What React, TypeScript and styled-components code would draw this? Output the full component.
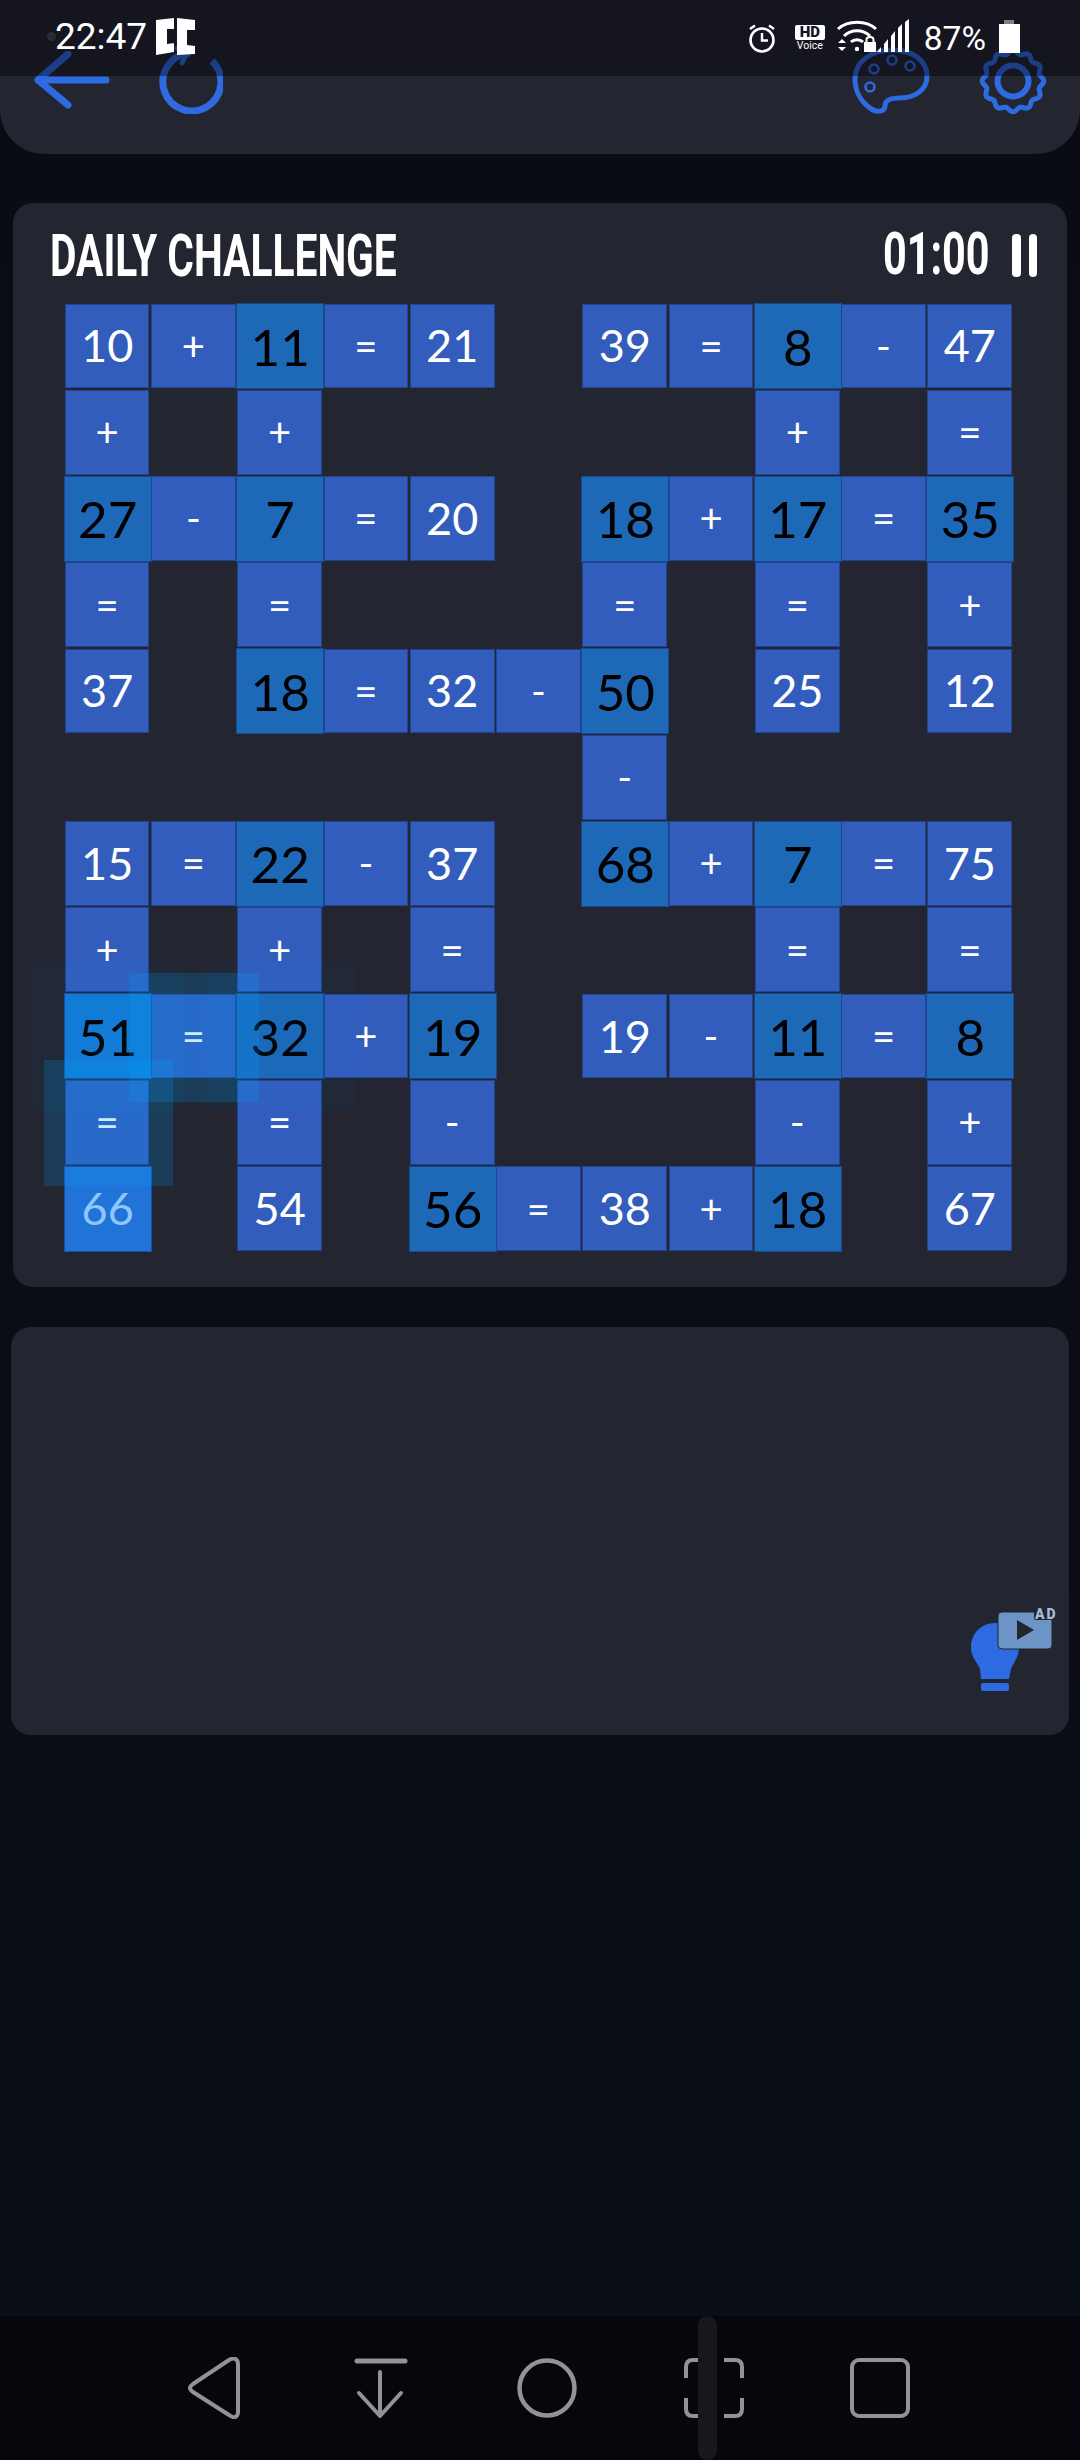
import React from 'react';
import styled, { createGlobalStyle } from 'styled-components';

const ROWS = [
    ['10', '+', '11*', '=', '21', '', '39', '=', '8*', '-', '47'],
    ['+', '', '+', '', '', '', '', '', '+', '', '='],
    ['27*', '-', '7*', '=', '20', '', '18*', '+', '17*', '=', '35*'],
    ['=', '', '=', '', '', '', '=', '', '=', '', '+'],
    ['37', '', '18*', '=', '32', '-', '50*', '', '25', '', '12'],
    ['', '', '', '', '', '', '-', '', '', '', ''],
    ['15', '=', '22*', '-', '37', '', '68*', '+', '7*', '=', '75'],
    ['+', '', '+', '', '=', '', '', '', '=', '', '='],
    ['51#', '=', '32*', '+', '19*', '', '19', '-', '11*', '=', '8*'],
    ['=', '', '=', '', '-', '', '', '', '-', '', '+'],
    ['66!', '', '54', '', '56*', '=', '38', '+', '18*', '', '67'],
];

const GLOWS = [
    { x: 32, y: 962, size: 151, h: 148, alpha: 0.04 },
    { x: 206, y: 962, size: 151, h: 148, alpha: 0.04 },
    { x: 129, y: 973, size: 130, h: 129, alpha: 0.2 },
    { x: 44, y: 1060, size: 129, h: 126, alpha: 0.2 },
];

function gearPath(cx: number, cy: number, r: number, bumps: number) {
    let d = '';
    for (let i = 0; i <= 180; i++) {
        const a = (i / 180) * Math.PI * 2;
        const rr = r + 1.8 * Math.cos(a * bumps);
        d += (i ? 'L' : 'M') + (cx + rr * Math.cos(a)).toFixed(2) + ' ' + (cy + rr * Math.sin(a)).toFixed(2);
    }
    return d + 'Z';
}

function tileVariant(raw: string): TileVariant {
    if (raw.endsWith('*')) return 'solved';
    if (raw.endsWith('#')) return 'selected';
    if (raw.endsWith('!')) return 'active';
    return 'plain';
}

function App() {
    return (
        <>
            <GlobalStyle />
            <Screen>
                <StatusBar>
                    <StatusLeft>
                        <CameraDot />
                        <Clock>22:47</Clock>
                        <svg width="40" height="38" viewBox="0 0 40 38">
                            <path fill="#fff" fillRule="evenodd" d="M0 2 L18 0 V34 L0 37Z M11 11 V26 L18 25 V11Z" />
                            <path fill="#fff" fillRule="evenodd" d="M21 0 L39 2 V36 L21 37Z M31 12 V27 L39 28 V12Z" />
                        </svg>
                    </StatusLeft>
                    <StatusRight>
                        <AlarmSlot>
                            <svg width="28" height="32" viewBox="0 0 28 32" fill="none" stroke="#fff">
                                <circle cx="14" cy="18" r="11.5" strokeWidth="2.6" />
                                <path d="M14 11 V18.5 H20" strokeWidth="2.4" />
                                <path d="M2 7 L7 3.5 M26 7 L21 3.5" strokeWidth="2.4" />
                            </svg>
                        </AlarmSlot>
                        <HdSlot>
                            <HdBox>HD</HdBox>
                            <VoiceLabel>Voice</VoiceLabel>
                        </HdSlot>
                        <svg width="40" height="34" viewBox="0 0 40 34" fill="none" stroke="#fff" strokeWidth="3">
                            <path d="M1 10 C11 1 29 1 39 10" />
                            <path d="M7 17 C14 10 26 10 33 17" />
                            <path d="M14 23 C17 20 23 20 26 23" />
                            <circle cx="20" cy="30" r="2.2" fill="#fff" stroke="none" />
                            <path d="M1 24 L5 20 L9 24Z M1 28 L5 32 L9 28Z" fill="#fff" stroke="none" />
                            <rect x="27" y="23" width="12" height="10" fill="#fff" stroke="none" />
                            <path d="M29.5 23 V20.5 C29.5 17 36.5 17 36.5 20.5 V23" strokeWidth="2" />
                        </svg>
                        <svg width="33" height="34" viewBox="0 0 33 34" fill="#fff">
                            <path d="M0 33 L4 28 V33Z M7 33 V25 L11 20 V33Z M14 33 V17 L18 12 V33Z M21 33 V9 L25 5 V33Z M28 33 V3 L32 0 V33Z" />
                        </svg>
                        <Percent>87%</Percent>
                        <Battery />
                    </StatusRight>
                </StatusBar>

                <TopPanel>
                    <IconGroup $gap={47}>
                        <svg width="76" height="58" viewBox="0 0 76 58" fill="none" stroke="#2f6be0" strokeWidth="7" strokeLinecap="round" strokeLinejoin="round">
                            <path d="M72 29 H4 M34 3 L4 29 L34 54" />
                        </svg>
                        <svg width="66" height="68" viewBox="0 0 66 68" fill="none" stroke="#2f6be0" strokeWidth="7" strokeLinecap="round">
                            <path d="M55 15 A29 29 0 1 1 33 7" strokeLinecap="butt" />
                            <path d="M20 2 L30 7 L25 17" strokeWidth="5" />
                        </svg>
                    </IconGroup>
                    <IconGroup $gap={49}>
                        <svg width="78" height="70" viewBox="0 0 78 70" fill="none" stroke="#2f6be0">
                            <path strokeWidth="5" d="M40 4 C60 4 75 14 75 30 C75 46 60 52 48 52 C38 52 33 54 33 60 C33 66 24 67 18 62 C8 55 3 44 3 33 C3 15 20 4 40 4Z" />
                            <circle cx="22" cy="23" r="4.5" strokeWidth="2.6" />
                            <circle cx="40" cy="14" r="4.5" strokeWidth="2.6" />
                            <circle cx="58" cy="20" r="4.5" strokeWidth="2.6" />
                            <circle cx="18" cy="41" r="4.5" strokeWidth="2.6" />
                        </svg>
                        <svg width="68" height="68" viewBox="0 0 68 68" fill="none" stroke="#2f6be0">
                            <path strokeWidth="5" d={gearPath(34, 34, 29, 12)} />
                            <circle cx="34" cy="34" r="15.5" strokeWidth="6" />
                        </svg>
                    </IconGroup>
                </TopPanel>

                <GameCard>
                    <CardHeader>
                        <Title>DAILY CHALLENGE</Title>
                        <TimerWrap>
                            <Timer>01:00</Timer>
                            <PauseBar />
                            <PauseBar />
                        </TimerWrap>
                    </CardHeader>
                    <Board>
                        {ROWS.flatMap((row, r) =>
                            row.map((raw, c) => {
                                if (!raw) return <span key={`${r}-${c}`} />;
                                const text = raw.replace(/[*!#]/, '');
                                return (
                                    <Tile key={`${r}-${c}`} $variant={tileVariant(raw)} $op={/[+=-]/.test(text)}>
                                        {text}
                                    </Tile>
                                );
                            })
                        )}
                    </Board>
                </GameCard>

                <HintCard>
                    <svg width="90" height="86" viewBox="0 0 90 86">
                        <path fill="#2f6be0" d="M25 16 C11 16 1 27 1 40 C1 50 7 55 10 62 L11 72 H39 L41 62 C44 55 49 50 49 40 C49 27 39 16 25 16Z" />
                        <rect x="11" y="76" width="28" height="8" rx="2" fill="#2f6be0" />
                        <rect x="28" y="5" width="54" height="37" rx="4" fill="#6c94c4" stroke="#232530" strokeWidth="1" />
                        <path d="M47 13 L64 23 L47 33Z" fill="#232530" />
                        <rect x="64" y="0" width="24" height="13" rx="2" fill="#232530" />
                        <AdText x="65" y="12">AD</AdText>
                    </svg>
                </HintCard>

                <Filler />

                <NavBar>
                    <NavSlot>
                        <svg width="54" height="62" viewBox="0 0 54 62" fill="none" stroke="#939397" strokeWidth="4" strokeLinejoin="round">
                            <path d="M5 27 L41 3 C46 0 50 2 50 7 V55 C50 60 46 62 41 58 L5 35 C1 32 1 30 5 27Z" />
                        </svg>
                    </NavSlot>
                    <NavSlot>
                        <svg width="54" height="62" viewBox="0 0 54 62" fill="none" stroke="#939397" strokeLinecap="round" strokeLinejoin="round">
                            <path d="M3 4 H51" strokeWidth="5" />
                            <path d="M26 15 V59 M5 36 L26 59 L47 36" strokeWidth="4" />
                        </svg>
                    </NavSlot>
                    <NavSlot>
                        <svg width="60" height="62" viewBox="0 0 60 62" fill="none" stroke="#939397" strokeWidth="4.5">
                            <circle cx="30" cy="31" r="27.5" />
                        </svg>
                    </NavSlot>
                    <NavSlot>
                        <svg width="60" height="62" viewBox="0 0 60 62" fill="none" stroke="#939397" strokeWidth="4">
                            <path d="M20 3 H9 Q2 3 2 10 V21 M40 3 H51 Q58 3 58 10 V21 M2 41 V52 Q2 59 9 59 H20 M58 41 V52 Q58 59 51 59 H40" />
                        </svg>
                    </NavSlot>
                    <NavSlot>
                        <svg width="60" height="62" viewBox="0 0 60 62" fill="none" stroke="#939397" strokeWidth="4">
                            <rect x="2" y="3" width="56" height="56" rx="7" />
                        </svg>
                    </NavSlot>
                    <ScrollPill />
                </NavBar>

                {GLOWS.map((g) => (
                    <Glow
                        key={`${g.x}-${g.y}`}
                        style={{ left: g.x, top: g.y, width: g.size, height: g.h, background: `rgba(0, 160, 255, ${g.alpha})` }}
                    />
                ))}
            </Screen>
        </>
    );
}

const GlobalStyle = createGlobalStyle`
    html, body {
        margin: 0;
        padding: 0;
        background: #0a0c14;
    }
`;

const Screen = styled.div`
    position: relative;
    display: flex;
    flex-direction: column;

    width: 1080px;
    height: 2460px;
    overflow: hidden;

    background: linear-gradient(#0a0c14, #0a0e17);
    font-family: 'Roboto', 'Liberation Sans', sans-serif;
`;

const StatusBar = styled.div`
    position: absolute;
    top: 0;
    left: 0;
    z-index: 3;

    display: flex;
    justify-content: space-between;
    align-items: flex-start;

    box-sizing: border-box;
    width: 100%;
    height: 76px;
    padding: 17px 60px 0 55px;

    background-color: rgba(0, 0, 10, 0.42);
    color: #fff;
`;

const StatusLeft = styled.div`
    position: relative;
    display: flex;
    align-items: center;
    gap: 9px;
`;

const CameraDot = styled.div`
    position: absolute;
    top: 15px;
    left: -8px;

    width: 9px;
    height: 9px;

    border-radius: 50%;
    background-color: #2c2d33;
`;

const Clock = styled.span`
    font-size: 37px;
    line-height: 40px;
`;

const StatusRight = styled.div`
    display: flex;
    align-items: flex-start;
    margin-top: 2px;
`;

const AlarmSlot = styled.div`
    margin: 3px 19px 0 0;
    height: 32px;
`;

const HdSlot = styled.div`
    display: flex;
    flex-direction: column;
    align-items: center;
    width: 30px;
    margin: 6px 12px 0 0;
`;

const HdBox = styled.div`
    width: 100%;
    height: 15px;

    border-radius: 2px;
    background-color: #fff;
    color: #14151f;

    font-size: 15px;
    font-weight: 900;
    line-height: 15px;
    text-align: center;
`;

const VoiceLabel = styled.div`
    font-size: 10.5px;
    line-height: 12px;
`;

const Percent = styled.span`
    margin: 2px 13px 0 14px;
    font-size: 33.5px;
    line-height: 36px;
`;

const Battery = styled.div`
    position: relative;
    width: 21px;
    height: 29px;
    margin-top: 5px;
    background-color: #fff;

    &::before {
        content: '';
        position: absolute;
        top: -4px;
        left: 5px;
        width: 10px;
        height: 4px;
        background-color: #808084;
    }
`;

const TopPanel = styled.div`
    display: flex;
    justify-content: space-between;
    align-items: flex-start;

    box-sizing: border-box;
    height: 154px;
    padding: 46px 33px 0 34px;

    border-radius: 0 0 44px 44px;
    background-color: #232530;
`;

const IconGroup = styled.div<{ $gap: number }>`
    display: flex;
    align-items: center;
    gap: ${(p) => p.$gap}px;
`;

const GameCard = styled.div`
    box-sizing: border-box;
    height: 1084px;
    margin: 49px 13px 0;
    padding: 23px 30px 0 51px;

    border-radius: 20px;
    background-color: #232530;
`;

const CardHeader = styled.div`
    display: flex;
    justify-content: space-between;
    align-items: flex-start;

    height: 77px;
    margin-left: -14px;
`;

const Title = styled.h1`
    margin: 0;

    color: #fff;
    font-family: 'Roboto', sans-serif;
    font-size: 59px;
    font-weight: 700;
    line-height: 60px;
    white-space: nowrap;

    transform: scaleX(0.69);
    transform-origin: left center;
`;

const TimerWrap = styled.div`
    display: flex;
    align-items: flex-start;
    gap: 8px;
`;

const Timer = styled.span`
    margin: -2px 14px 0 0;

    color: #fff;
    font-size: 60px;
    font-weight: 700;
    line-height: 60px;

    transform: scaleX(0.69);
    transform-origin: right center;
`;

const PauseBar = styled.i`
    display: block;
    width: 8.5px;
    height: 43px;
    margin-top: 8px;

    border-radius: 4px;
    background-color: #fff;
`;

const Board = styled.div`
    display: grid;
    grid-template-columns: repeat(11, 86.27px);
    grid-auto-rows: 86.27px;
`;

const TILE_BG = {
    plain: '#325dbd',
    solved: '#1d69b8',
    selected: '#137ad4',
    active: '#2273d8',
};

const TILE_TEXT = {
    plain: '#fff',
    solved: '#000',
    selected: '#000',
    active: '#8cc8ff',
};

type TileVariant = keyof typeof TILE_BG;

const Tile = styled.div<{ $variant: TileVariant; $op: boolean }>`
    position: relative;
    z-index: ${(p) => (p.$variant === 'plain' ? 0 : 1)};

    display: flex;
    justify-content: center;
    align-items: center;

    box-sizing: border-box;
    margin: ${(p) => (p.$variant === 'plain' ? '0.5px 0.8px 1px' : '0 -1.5px 0 -0.5px')};

    border: 1px solid rgba(20, 45, 110, 0.55);
    background-color: ${(p) => TILE_BG[p.$variant]};
    color: ${(p) => TILE_TEXT[p.$variant]};

    font-family: 'Lato', 'Open Sans', sans-serif;
    font-size: ${(p) => {
        if (p.$op) return 40;
        return p.$variant === 'solved' || p.$variant === 'selected' ? 51 : 45;
    }}px;
    line-height: 1;
`;

const HintCard = styled.div`
    display: flex;
    justify-content: flex-end;
    align-items: flex-end;

    box-sizing: border-box;
    height: 408px;
    margin: 40px 11px 0;
    padding: 0 9px 42px 0;

    border-radius: 20px;
    background-color: #232530;
`;

const AdText = styled.text`
    fill: #a8bcd8;
    font-family: 'Roboto', sans-serif;
    font-size: 14px;
    font-weight: 900;
    letter-spacing: 2px;
`;

const Filler = styled.div`
    flex: 1;
`;

const NavBar = styled.div`
    position: relative;
    display: grid;
    grid-template-columns: repeat(5, 1fr);

    box-sizing: border-box;
    height: 144px;
    padding: 0 117px 0 132px;

    background-color: #05070c;
`;

const NavSlot = styled.div`
    display: flex;
    justify-content: center;
    align-items: center;
`;

const ScrollPill = styled.div`
    position: absolute;
    top: 0;
    left: 698px;

    width: 19px;
    height: 144px;

    border-radius: 10px;
    background-color: #17181d;
`;

const Glow = styled.div`
    position: absolute;
    z-index: 2;
    pointer-events: none;
`;

export default App;
